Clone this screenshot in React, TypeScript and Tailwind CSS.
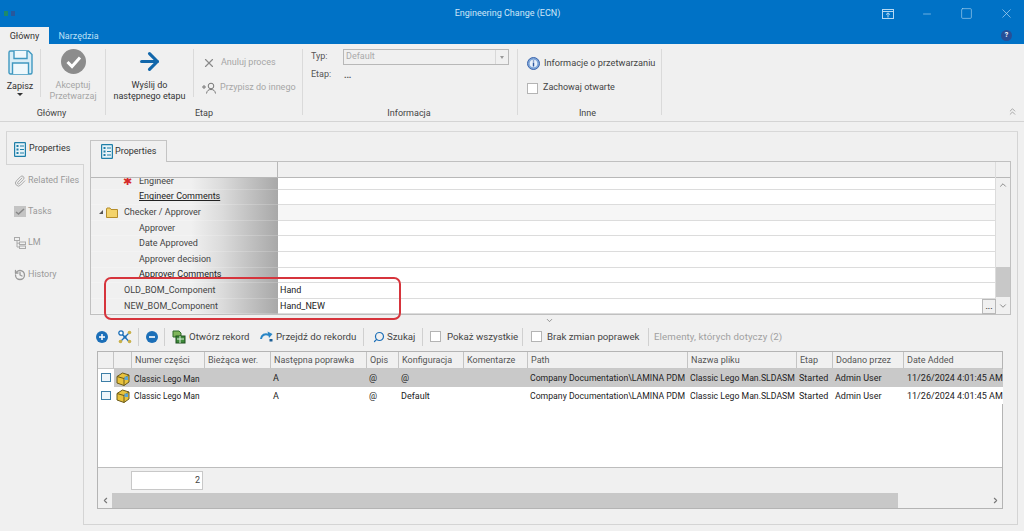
import { ArrowRight, ChevronDown, ChevronLeft, ChevronRight, ChevronUp, ChevronsUp, Minus, Paperclip, Search, Square, X, History } from "lucide-react";

const font = { fontFamily: 'Roboto, "Liberation Sans", sans-serif' };

const Sep = ({ className = "" }: { className?: string }) => <div className={`w-px h-[18px] bg-[#d0d0d0] shrink-0 ${className}`} />;

const Check = ({ className = "" }: { className?: string }) => (
    <div className={`w-[11px] h-[11px] bg-white border border-[#b4b4b4] shrink-0 ${className}`} />
);

const ListIcon = () => (
    <svg width="12" height="15" viewBox="0 0 12 15" className="shrink-0">
        <rect x=".6" y=".6" width="10.800" height="13.800" rx=".5" fill="#e6f3f8" stroke="#1f7fa8" strokeWidth="1.200" />
        <path d="M2.500 3h2v2h-2zM2.500 6.500h2v2h-2zM2.500 10h2v2h-2z" fill="#1f7fa8" />
        <path d="M6 4h4M6 7.500h4M6 11h4" stroke="#1f7fa8" strokeWidth="1" />
    </svg>
);

const CubeIcon = () => (
    <svg width="14" height="14" viewBox="0 0 14 14" className="shrink-0">
        <path d="M1 4.500 6.500 1 13 3v7l-5 3.500L1 11z" fill="#e8c23c" stroke="#6b5a1a" strokeWidth="1" />
        <path d="M1 4.500 8 6.500 13 3M8 6.500v7" fill="none" stroke="#6b5a1a" strokeWidth="1" />
        <rect x="8.500" y="4.500" width="3.500" height="3.500" fill="#5aa6d6" />
    </svg>
);

const GridHead = ["", "", "Numer części", "Bieżąca wer.", "Następna poprawka", "Opis", "Konfiguracja", "Komentarze", "Path", "Nazwa pliku", "Etap", "Dodano przez", "Date Added"];
const gridCols = "grid grid-cols-[16px_18px_73px_66px_96px_32px_65px_64px_160px_109px_36px_71px_99px]";

const PartRow = ({ selected, config }: { selected?: boolean; config: string }) => {
    const cell = `h-[17.500px] pt-[2px] flex items-center overflow-hidden whitespace-nowrap ${selected ? "bg-[#c9c9c9]" : "bg-white"}`;
    return (
        <div className={gridCols}>
            <div className="h-[17.500px] flex items-center justify-center bg-white">
                <div className="w-[10px] h-[9px] bg-[#eef5fa] border border-[#3d7ea6]" />
            </div>
            <div className={`${cell} justify-center`}><CubeIcon /></div>
            <div className={`${cell} pl-[2px] col-span-2 text-[8.300px]`}>Classic Lego Man</div>
            <div className={`${cell} pl-[2px]`}>A</div>
            <div className={`${cell} pl-[2px]`}>@</div>
            <div className={`${cell} pl-[2px]`}>{config}</div>
            <div className={cell} />
            <div className={`${cell} pl-[2px] text-[8.700px]`}>Company Documentation\LAMINA PDM</div>
            <div className={`${cell} pl-[2px] text-[8.700px]`}>Classic Lego Man.SLDASM</div>
            <div className={`${cell} pl-[2px]`}>Started</div>
            <div className={`${cell} pl-[2px]`}>Admin User</div>
            <div className={`${cell} pl-[3px]`}>11/26/2024 4:01:45 AM</div>
        </div>
    );
};

const PropRow = ({ label, indent, underline, value, icon, shaded }: { label: string; indent: string; underline?: boolean; value?: string; icon?: React.ReactNode; shaded?: boolean }) => (
    <div className="flex h-[15.600px]">
        <div className={`w-[187px] shrink-0 flex items-center ${indent} relative whitespace-nowrap border-b border-[#ffffff30]`}>
            {icon}
            <span className={underline ? "underline text-[#222]" : "text-[#444]"}>{label}</span>
        </div>
        <div className={`flex-1 pl-[2px] flex items-center border-b border-[#dcdcdc] ${shaded ? "bg-[#f6f6f6]" : "bg-white"} text-[#222]`}>{value}</div>
    </div>
);

const SideTab = ({ icon, label }: { icon: React.ReactNode; label: string }) => (
    <div className="h-[31.300px] pt-[2px] pl-[8px] flex items-center gap-[2px] text-[#9a9a9a] whitespace-nowrap">
        {icon}
        <span>{label}</span>
    </div>
);

export default function App() {
    return (
        <div style={font} className="w-[1024px] h-[531px] overflow-hidden bg-[#f0f0f0] text-[9px] text-[#333] relative">
            {/* title bar */}
            <div className="h-[44px] bg-[#0072c6] flex flex-col">
                <div className="h-[27px] flex items-center">
                    <div className="flex-1 pl-[4px] flex gap-[3px]">
                        <div className="w-[4px] h-[5px] bg-[#1d8a6a]" />
                        <div className="w-[4px] h-[5px] bg-[#27589c]" />
                    </div>
                    <div className="text-[#cfe6f7] mr-[3px]">Engineering Change (ECN)</div>
                    <div className="flex-1 flex justify-end items-center text-[#b5d8f2] pr-[10px]">
                        <svg width="12" height="10" viewBox="0 0 12 10" className="mr-[27px]">
                            <rect x=".5" y=".5" width="11" height="9" fill="none" stroke="currentColor" />
                            <path d="M.5 2.500h11M6 8.500V4M4 5.700 6 3.800l2 1.900" fill="none" stroke="currentColor" />
                        </svg>
                        <Minus size={12} strokeWidth={1.200} className="mr-[27px]" />
                        <Square size={13} strokeWidth={1.100} className="mr-[26px]" />
                        <X size={15} strokeWidth={1.100} />
                    </div>
                </div>
                <div className="h-[17px] flex items-stretch justify-between">
                    <div className="flex">
                        <div className="w-[49px] bg-[#f0f0f0] pt-[2px] flex items-center justify-center text-[#333]">Główny</div>
                        <div className="w-[59px] pt-[2px] flex items-center justify-center text-[#bfe0f7]">Narzędzia</div>
                    </div>
                    <div className="w-[11px] h-[11px] mr-[12px] mt-[3px] rounded-full bg-[#274f97] text-white text-[7px] font-bold flex items-center justify-center">?</div>
                </div>
            </div>

            {/* ribbon */}
            <div className="h-[78px] border-b border-[#d4d4d4] flex items-start pt-[5px] relative whitespace-nowrap">
                <div className="w-[106px] h-[66px] border-r border-[#dadada] flex flex-col">
                    <div className="h-[53px] shrink-0 flex">
                        <div className="w-[40px] flex flex-col items-center">
                            <svg width="25" height="25" viewBox="0 0 25 25" className="mt-[1px]">
                                <path d="M1 2.500A1.500 1.500 0 0 1 2.500 1h18L24 4.500v18a1.500 1.500 0 0 1-1.500 1.500h-20A1.500 1.500 0 0 1 1 22.500z" fill="#d8edf6" stroke="#3f98c0" strokeWidth="1.400" />
                                <path d="M6 1v7.500h13V1M4.500 24V13h16v11" fill="#eef8fc" stroke="#3f98c0" strokeWidth="1.400" />
                            </svg>
                            <div className="mt-[5px] leading-[12px] text-[#333]">Zapisz</div>
                            <div className="mt-[1px] w-0 h-0 border-x-[3px] border-x-transparent border-t-[3px] border-t-[#333]" />
                        </div>
                        <div className="w-px h-[48px] bg-[#dadada]" />
                        <div className="flex-1 flex flex-col items-center text-[#a6a6a6] leading-[11px]">
                            <svg width="25" height="25" viewBox="0 0 25 25" className="shrink-0">
                                <circle cx="12.500" cy="12.500" r="12.500" fill="#8c8c8c" />
                                <path d="M6.500 13l4.500 4.500 8-9" fill="none" stroke="#fff" strokeWidth="3" />
                            </svg>
                            <div className="mt-[6px]">Akceptuj</div>
                            <div>Przetwarzaj</div>
                        </div>
                    </div>
                    <div className="shrink-0 text-center text-[#444] leading-[12px] mt-[5px] pr-[2px]">Główny</div>
                </div>
                <div className="w-[197px] h-[66px] border-r border-[#dadada] flex flex-col">
                    <div className="h-[53px] shrink-0 flex">
                        <div className="w-[87px] flex flex-col items-center leading-[11px] text-[#333]">
                            <ArrowRight size={27} strokeWidth={2.800} className="text-[#1267ab] mt-[-1px] shrink-0" />
                            <div className="mt-[5px]">Wyślij do</div>
                            <div>następnego etapu</div>
                        </div>
                        <div className="w-px h-[48px] bg-[#dadada]" />
                        <div className="flex-1 flex flex-col text-[#a6a6a6] pl-[8px] pt-[7px] gap-[11px]">
                            <div className="flex items-center gap-[5px] h-[14px]"><X size={14} strokeWidth={2} className="text-[#8a8a8a]" />Anuluj proces</div>
                            <div className="flex items-center gap-[4px] h-[14px]">
                                <svg width="14" height="12" viewBox="0 0 14 12" className="text-[#777]">
                                    <path d="M0 5h4M2 3v4" stroke="currentColor" />
                                    <circle cx="9" cy="4" r="2.800" fill="none" stroke="currentColor" />
                                    <path d="M4.500 11.500c.5-3 2-4 4.500-4s4 1 4.500 4" fill="none" stroke="currentColor" />
                                </svg>
                                Przypisz do innego
                            </div>
                        </div>
                    </div>
                    <div className="shrink-0 text-center text-[#444] leading-[12px] mt-[5px]">Etap</div>
                </div>
                <div className="w-[215px] h-[66px] border-r border-[#dadada] flex flex-col">
                    <div className="h-[53px] shrink-0 pl-[8px] text-[#555]">
                        <div className="flex items-center h-[16px]">
                            <div className="w-[32px]">Typ:</div>
                            <div className="w-[166px] h-[16px] bg-[#f0f0f0] border border-[#b8b8b8] flex items-center justify-between pl-[2px] text-[#aaa]">
                                Default
                                <div className="w-[13px] h-full border-l border-[#d8d8d8] flex items-center justify-center">
                                    <div className="w-0 h-0 border-x-[2.500px] border-x-transparent border-t-[3px] border-t-[#999]" />
                                </div>
                            </div>
                        </div>
                        <div className="flex items-center h-[14px] mt-[3px]">
                            <div className="w-[33px]">Etap:</div>
                            <div className="tracking-tight font-bold text-[#555] leading-[8px]">...</div>
                        </div>
                    </div>
                    <div className="shrink-0 text-center text-[#444] leading-[12px] mt-[5px] pr-[2px]">Informacja</div>
                </div>
                <div className="w-[144px] h-[66px] border-r border-[#dadada] flex flex-col">
                    <div className="h-[53px] shrink-0 pl-[9px] pt-[7px] flex flex-col gap-[11px] text-[#444]">
                        <div className="flex items-center gap-[4px] h-[14px] text-[9.200px]">
                            <svg width="13" height="13" viewBox="0 0 13 13">
                                <circle cx="6.500" cy="6.500" r="6" fill="#7fa6d8" stroke="#3d66ad" />
                                <circle cx="6.500" cy="6.500" r="3.800" fill="#eaf1fa" />
                                <path d="M6.500 3.500v1M6.500 5.500v4" stroke="#2b569f" strokeWidth="1.400" />
                            </svg>
                            Informacje o przetwarzaniu
                        </div>
                        <div className="flex items-center gap-[5px] h-[14px]"><Check />Zachowaj otwarte</div>
                    </div>
                    <div className="shrink-0 text-center text-[#444] leading-[12px] mt-[5px] pr-[4px]">Inne</div>
                </div>
                <ChevronsUp size={11} strokeWidth={1.500} className="absolute right-[6px] bottom-[4px] text-[#888]" />
            </div>

            {/* main */}
            <div className="h-[394px] mt-[9px] mx-[6px] flex border-t border-[#d8d8d8]">
                <div className="w-[77px] shrink-0 flex flex-col">
                    <div className="h-[33px] pt-[2px] bg-[#f0f0f0] flex items-center gap-[3px] pl-[7px] border-l border-b border-[#d4d4d4] text-[#333] mr-[-1px] relative shrink-0">
                        <ListIcon />
                        <span>Properties</span>
                    </div>
                    <div className="-mt-px">
                        <SideTab icon={<Paperclip size={12} strokeWidth={2} className="text-[#aaa]" />} label="Related Files" />
                        <SideTab icon={<svg width="12" height="11" viewBox="0 0 12 11"><rect width="12" height="11" fill="#c4c4c4" /><path d="M2 6l2.500 2L10 3" stroke="#888" strokeWidth="1.500" fill="none" /></svg>} label="Tasks" />
                        <SideTab icon={<svg width="12" height="12" viewBox="0 0 12 12" fill="none" stroke="#aaa"><rect x=".5" y=".5" width="5" height="3" /><rect x="5.500" y="5" width="6" height="2.500" /><rect x="5.500" y="9" width="6" height="2.500" /><path d="M3 3.500V10h2.500M3 6.200h2.500" /></svg>} label="LM" />
                        <SideTab icon={<History size={12} strokeWidth={2.600} className="text-[#999]" />} label="History" />
                    </div>
                </div>
                <div className="flex-1 border-x border-b border-[#d4d4d4] px-[6px] pt-[8px] flex flex-col min-w-0">
                    {/* property tab */}
                    <div className="w-[77px] h-[22px] border-x border-t border-[#c4c4c4] flex items-center gap-[2px] pl-[10px] text-[#333] -mb-px relative bg-[#f0f0f0] shrink-0">
                        <ListIcon />
                        <span>Properties</span>
                    </div>
                    <div className="h-[154px] border border-[#c0c0c0] flex shrink-0">
                        <div className="flex-1 min-w-0 flex flex-col">
                            <div className="h-[16px] shrink-0 flex border-b border-[#b8b8b8]">
                                <div className="w-[187px] border-r border-[#b8b8b8]" />
                            </div>
                            <div className="flex-1 overflow-hidden bg-linear-to-r from-[#f0f0f0] from-[100px] via-[#dcdcdc] via-[130px] to-[#a8a8a8] to-[187px]">
                                <div className="-mt-[4px] leading-[15px]">
                                    <PropRow label="Engineer" indent="pl-[48px]" icon={<span className="absolute left-[32px] text-[#d62b2b] text-[11px]">✱</span>} />
                                    <PropRow label="Engineer Comments" indent="pl-[48px]" underline />
                                    <PropRow shaded label="Checker / Approver" indent="pl-[33px]" icon={
                                        <span className="absolute left-[8px] flex items-center gap-[3px]">
                                            <span className="w-0 h-0 border-l-[4px] border-l-transparent border-b-[4px] border-b-[#555]" />
                                            <svg width="12" height="11" viewBox="0 0 12 11"><path d="M.5 2V10.500h11V2.500H5L4 1H1z" fill="#f3d36b" stroke="#b58d2a" /></svg>
                                        </span>
                                    } />
                                    <PropRow label="Approver" indent="pl-[48px]" />
                                    <PropRow label="Date Approved" indent="pl-[48px]" />
                                    <PropRow label="Approver decision" indent="pl-[48px]" />
                                    <PropRow label="Approver Comments" indent="pl-[48px]" underline />
                                    <PropRow label="OLD_BOM_Component" indent="pl-[33px]" value="Hand" />
                                    <PropRow label="NEW_BOM_Component" indent="pl-[33px]" value="Hand_NEW" />
                                </div>
                            </div>
                        </div>
                        {/* property scrollbar */}
                        <div className="w-[15px] shrink-0 bg-[#f0f0f0] flex flex-col border-l border-[#dcdcdc]">
                            <div className="h-[16px] shrink-0 border-b border-[#b8b8b8]" />
                            <div className="h-[14px] shrink-0 flex items-center justify-center"><ChevronUp size={10} className="text-[#777]" /></div>
                            <div className="flex-1" />
                            <div className="h-[30px] shrink-0 bg-[#c8c8c8]" />
                            <div className="h-[17px] shrink-0 flex items-center justify-center"><ChevronDown size={10} className="text-[#777]" /></div>
                        </div>
                    </div>
                    <div className="h-[11px] flex items-center justify-center pr-[2px] shrink-0"><ChevronDown size={9} className="text-[#777]" /></div>

                    {/* toolbar */}
                    <div className="h-[21px] pl-[6px] flex items-center text-[#444] whitespace-nowrap text-[9.700px] shrink-0">
                        <svg width="12" height="12" viewBox="0 0 12 12" className="mr-[10px] shrink-0"><circle cx="6" cy="6" r="6" fill="#1c6fb8" /><path d="M6 3v6M3 6h6" stroke="#fff" strokeWidth="1.500" /></svg>
                        <svg width="14" height="14" viewBox="0 0 14 14" className="mr-[6px] shrink-0" fill="none">
                            <path d="M2.500 2.500 11 11.500M11.500 2.500l-9 9" stroke="#1c6fb8" strokeWidth="1.300" />
                            <circle cx="3" cy="3" r="2.200" fill="#fff" stroke="#1c6fb8" strokeWidth="1.300" />
                            <circle cx="11.500" cy="2.500" r="1.800" fill="#c9b04a" />
                            <circle cx="2.500" cy="11.500" r="1.800" fill="#c9b04a" />
                            <circle cx="11.500" cy="11.500" r="1.800" fill="#c9b04a" />
                            <circle cx="7" cy="7" r="1.600" fill="#1c6fb8" />
                        </svg>
                        <Sep className="mr-[7px]" />
                        <svg width="12" height="12" viewBox="0 0 12 12" className="mr-[6px] shrink-0"><circle cx="6" cy="6" r="6" fill="#1c6fb8" /><path d="M3 6h6" stroke="#fff" strokeWidth="1.600" /></svg>
                        <Sep className="mr-[7px]" />
                        <svg width="14" height="14" viewBox="0 0 14 14" className="mr-[3px] shrink-0"><path d="M1 1h6l2 2v4H1z" fill="#7fb55a" stroke="#2f6b2a" /><rect x="4" y="6" width="9" height="7" fill="#3f8a3a" stroke="#1f4f1f" /><path d="M5 9h7M8 6v7" stroke="#dfeedd" /></svg>
                        <span className="w-[61px] mr-[10px] pt-[1px]">Otwórz rekord</span>
                        <svg width="13" height="11" viewBox="0 0 13 11" className="mr-[3px] shrink-0" fill="none"><path d="M1 8c.5-4 4-6 8-4" stroke="#2a86c6" strokeWidth="2" /><path d="M7.500 .5 12.500 3 9 7z" fill="#2a86c6" /><rect x="9.500" y="8" width="3" height="2.500" fill="#1d5f96" /></svg>
                        <span className="w-[80px] mr-[7px] pt-[1px]">Przejdź do rekordu</span>
                        <Sep className="mr-[9px]" />
                        <Search size={12} strokeWidth={2.400} className="text-[#1c6fb8] -scale-x-100 mr-[2px] shrink-0" />
                        <span className="w-[28px] mr-[7px] pt-[1px]">Szukaj</span>
                        <Sep className="mr-[7px]" />
                        <Check className="mr-[6px]" />
                        <span className="w-[68px] mr-[7px] pt-[1px]">Pokaż wszystkie</span>
                        <Sep className="mr-[8px]" />
                        <Check className="mr-[5px]" />
                        <span className="w-[94px] mr-[7px] pt-[1px]">Brak zmian poprawek</span>
                        <Sep className="mr-[5px]" />
                        <span className="text-[#a0a0a0] tracking-[0.1px] pt-[1px]">Elementy, których dotyczy (2)</span>
                    </div>

                    {/* parts table */}
                    <div className="mt-[4px] ml-[7px] w-[906px] h-[158px] border border-[#b4b4b4] flex flex-col text-[#222] shrink-0">
                        <div className={`${gridCols} h-[17px] shrink-0 bg-[#f0f0f0] border-b border-[#c8c8c8]`}>
                            {GridHead.map((h, i) => (
                                <div key={i} className="pl-[3px] pt-[2px] flex items-center border-r border-[#c4c4c4] last:border-r-0 text-[#555] whitespace-nowrap overflow-hidden">{h}</div>
                            ))}
                        </div>
                        <PartRow selected config="@" />
                        <PartRow config="Default" />
                        <div className="flex-1 bg-white border-b border-[#bdbdbd]" />
                        <div className="h-[25px] shrink-0 pl-[33px] flex items-center">
                            <div className="w-[72px] h-[19px] bg-white border border-[#c8c8c8] flex items-center justify-end pr-[2px] text-[#444]">2</div>
                        </div>
                        <div className="h-[15px] shrink-0 flex items-center">
                            <div className="w-[14px] flex justify-center"><ChevronLeft size={9} strokeWidth={3} className="text-[#777]" /></div>
                            <div className="w-[786px] h-full bg-[#c8c8c8]" />
                            <div className="flex-1 flex justify-end pr-[2px]"><ChevronRight size={9} strokeWidth={3} className="text-[#777]" /></div>
                        </div>
                    </div>
                </div>
            </div>

            {/* dots button of the value editor */}
            <div className="absolute left-[982px] top-[299px] w-[14px] h-[15px] bg-[#f0f0f0] border border-[#b8b8b8] flex items-center justify-center text-[8px] leading-[8px] text-[#444] font-bold">...</div>
            {/* red highlight drawn over the grid */}
            <div className="absolute left-[104px] top-[277px] w-[297px] h-[43px] border-2 border-[#d6343c] rounded-[7px]" />
        </div>
    );
}
